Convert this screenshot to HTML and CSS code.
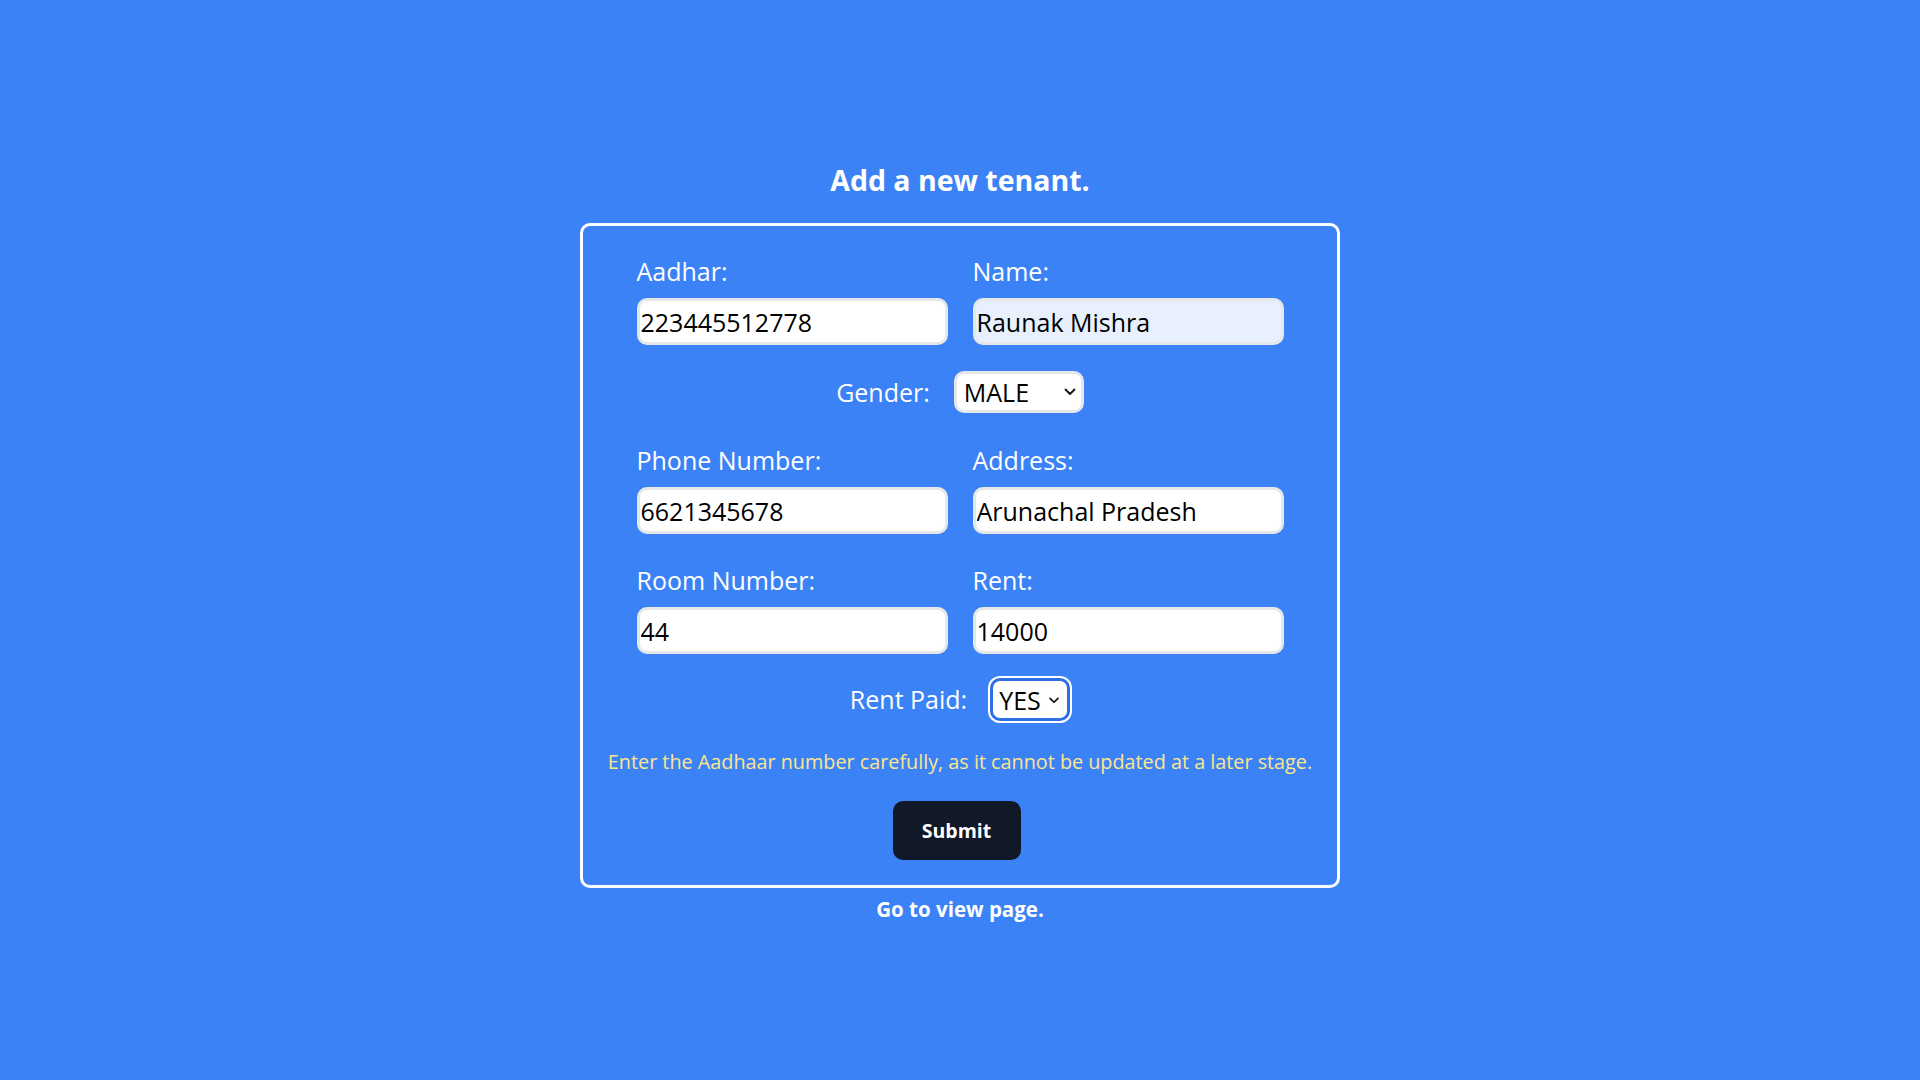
FILE: index.html
```html
<!DOCTYPE html>
<html lang="en">
<head>
<meta charset="utf-8">
<title>Add a new tenant</title>
<link rel="stylesheet" href="styles.css">
</head>
<body>
<main class="page">
  <h1 class="title">Add a new tenant.</h1>
  <form class="card">
    <div class="pair">
      <div class="field">
        <label class="label" for="aadhar">Aadhar:</label>
        <input class="input" id="aadhar" type="text" value="223445512778">
      </div>
      <div class="field">
        <label class="label" for="name">Name:</label>
        <input class="input input-autofill" id="name" type="text" value="Raunak Mishra">
      </div>
    </div>

    <div class="inline-row row-gender">
      <label class="label" for="gender">Gender:</label>
      <span class="select-wrap">
        <select class="select select-gender" id="gender">
          <option selected>MALE</option>
          <option>FEMALE</option>
          <option>OTHER</option>
        </select>
        <svg class="chevron" viewBox="0 0 12 8" width="12" height="8" aria-hidden="true"><path d="M1.5 1.5 L6 6 L10.5 1.5" fill="none" stroke="#111" stroke-width="1.8" stroke-linecap="round" stroke-linejoin="round"/></svg>
      </span>
    </div>

    <div class="pair row-phone">
      <div class="field">
        <label class="label" for="phone">Phone Number:</label>
        <input class="input" id="phone" type="text" value="6621345678">
      </div>
      <div class="field">
        <label class="label" for="address">Address:</label>
        <input class="input" id="address" type="text" value="Arunachal Pradesh">
      </div>
    </div>

    <div class="pair row-room">
      <div class="field">
        <label class="label" for="room">Room Number:</label>
        <input class="input" id="room" type="text" value="44">
      </div>
      <div class="field">
        <label class="label" for="rent">Rent:</label>
        <input class="input" id="rent" type="text" value="14000">
      </div>
    </div>

    <div class="inline-row row-paid">
      <label class="label" for="paid">Rent Paid:</label>
      <span class="select-wrap">
        <select class="select select-paid" id="paid">
          <option selected>YES</option>
          <option>NO</option>
        </select>
        <svg class="chevron chevron-small" viewBox="0 0 12 8" width="12" height="8" aria-hidden="true"><path d="M1.5 1.5 L6 6 L10.5 1.5" fill="none" stroke="#111" stroke-width="2" stroke-linecap="round" stroke-linejoin="round"/></svg>
      </span>
    </div>

    <p class="warning">Enter the Aadhaar number carefully, as it cannot be updated at a later stage.</p>

    <button class="submit" type="button">Submit</button>
  </form>
  <a class="view-link" href="#">Go to view page.</a>
</main>
</body>
</html>
```

FILE: styles.css
```css
html, body {
  margin: 0;
  padding: 0;
}

body {
  background: #3b82f6;
  font-family: "Open Sans", "Noto Sans", Arial, sans-serif;
  color: #ffffff;
  min-height: 1080px;
}

.page {
  display: flex;
  flex-direction: column;
  align-items: center;
  padding-top: 160px;
}

.title {
  margin: 0;
  font-size: 28.5px;
  line-height: 40px;
  font-weight: 700;
  color: #ffffff;
}

.card {
  box-sizing: border-box;
  width: 760px;
  margin-top: 23px;
  border: 3px solid #ffffff;
  border-radius: 10px;
  padding: 28px 54px 25px;
  display: flex;
  flex-direction: column;
  align-items: center;
}

.pair {
  display: grid;
  grid-template-columns: 311px 311px;
  column-gap: 25px;
}

.field {
  display: flex;
  flex-direction: column;
}

.label {
  font-size: 25px;
  line-height: 35px;
  color: #ffffff;
}

.input {
  box-sizing: border-box;
  margin-top: 9px;
  width: 311px;
  height: 47px;
  border: 3px solid #e5e7eb;
  border-radius: 10px;
  padding: 0 1px;
  background: #ffffff;
  color: #000000;
  font-family: "Open Sans", "Noto Sans", Arial, sans-serif;
  font-size: 25px;
  outline: none;
}

.input-autofill {
  background: #e8f0fe;
}

.inline-row {
  display: flex;
  align-items: center;
  justify-content: center;
  gap: 24px;
}

.row-gender {
  margin-top: 26px;
}

.row-phone {
  margin-top: 30px;
}

.row-room {
  margin-top: 29px;
}

.row-paid {
  margin-top: 24px;
  gap: 23px;
}

.select-wrap {
  position: relative;
  display: inline-flex;
}

.select {
  box-sizing: border-box;
  appearance: none;
  -webkit-appearance: none;
  height: 42px;
  border: 3px solid #e5e7eb;
  border-radius: 10px;
  background: #ffffff;
  color: #000000;
  font-family: "Open Sans", "Noto Sans", Arial, sans-serif;
  font-size: 25px;
  padding: 0 0 0 7px;
  outline: none;
}

.select-gender {
  width: 130px;
}

.select-paid {
  width: 80px;
  height: 43px;
  padding-left: 6px;
  border-color: #2f6fe6;
  box-shadow: 0 0 0 2px #ffffff;
}

.chevron {
  position: absolute;
  right: 8px;
  top: 17px;
  pointer-events: none;
}

.chevron-small {
  right: 10px;
  top: 19px;
  width: 12px;
  height: 7px;
}

.warning {
  margin: 26px 0 0;
  font-size: 19.8px;
  line-height: 30px;
  color: #fde68a;
  text-align: center;
  white-space: nowrap;
}

.submit {
  box-sizing: border-box;
  margin-top: 24px;
  margin-right: 7px;
  width: 128px;
  height: 59px;
  border: none;
  border-radius: 10px;
  background: #111827;
  color: #ffffff;
  font-family: "Open Sans", "Noto Sans", Arial, sans-serif;
  font-size: 19.5px;
  font-weight: 700;
  cursor: pointer;
}

.view-link {
  margin-top: 6px;
  font-size: 20.5px;
  line-height: 30px;
  font-weight: 700;
  color: #ffffff;
  text-decoration: none;
}
```
